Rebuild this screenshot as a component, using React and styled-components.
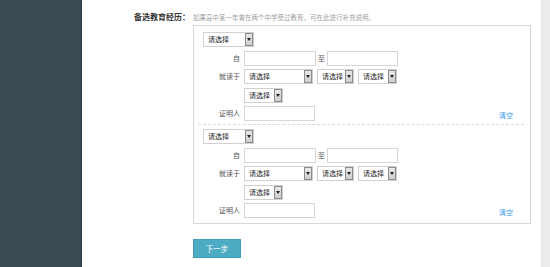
import styled, { createGlobalStyle } from 'styled-components';

const GlobalStyle = createGlobalStyle`
  html, body {
    margin: 0;
    padding: 0;
    background: #fff;
  }
  body {
    font-family: "Noto Sans CJK SC", "Liberation Sans", sans-serif;
    font-size: 7px;
    color: #333;
  }
`;

const groups = [0, 1];

const FakeSelect = ({ width, text = '请选择' }) => (
  <SelectBox $width={width}>
    <SelectText>{text}</SelectText>
    <SelectArrow>
      <svg width='4' height='3' viewBox='0 0 4 3'>
        <path d='M0 0 L4 0 L2 3 Z' fill='#222' />
      </svg>
    </SelectArrow>
  </SelectBox>
);

const EducationGroup = ({ last }) => (
  <Group $last={last}>
    <TypeRow>
      <FakeSelect width={51} />
    </TypeRow>
    <FieldRow>
      <FieldLabel>自</FieldLabel>
      <Controls $gap={2}>
        <TextInput $width={72} />
        <Between>至</Between>
        <TextInput $width={71} />
      </Controls>
    </FieldRow>
    <FieldRow>
      <FieldLabel>就读于</FieldLabel>
      <Controls $gap={4}>
        <FakeSelect width={69} />
        <FakeSelect width={37} />
        <FakeSelect width={39} />
      </Controls>
    </FieldRow>
    <FieldRow>
      <FieldLabel />
      <Controls>
        <FakeSelect width={39} />
      </Controls>
    </FieldRow>
    <FieldRow>
      <FieldLabel>证明人</FieldLabel>
      <Controls>
        <TextInput $width={71} />
        <ClearLink href='#'>清空</ClearLink>
      </Controls>
    </FieldRow>
  </Group>
);

const App = () => {
  return (
    <>
      <GlobalStyle />
      <Page>
        <Sidebar />
        <Main>
          <FormRow>
            <RowLabel>备选教育经历：</RowLabel>
            <RowBody>
              <Hint>如果高中某一年曾在两个中学受过教育，可在此进行补充说明。</Hint>
              <EducationBox>
                {groups.map(i => (
                  <EducationGroup key={i} last={i === groups.length - 1} />
                ))}
              </EducationBox>
            </RowBody>
          </FormRow>
          <FormRow>
            <RowLabel />
            <RowBody>
              <NextButton>下一步</NextButton>
            </RowBody>
          </FormRow>
        </Main>
        <RightStrip />
      </Page>
    </>
  );
};

const Page = styled.div`
  display: flex;
  height: 267px;
  overflow: hidden;
`;

const Sidebar = styled.div`
  width: 81px;
  background: #3a4952;
  border-right: 1px solid #2f3d45;
`;

const Main = styled.div`
  flex: 1;
  padding-top: 12px;
  background: #fff;
`;

const RightStrip = styled.div`
  width: 8px;
  background: #ececec;
  border-left: 1px solid #e2e2e2;
`;

const FormRow = styled.div`
  display: grid;
  grid-template-columns: 108px 1fr;
  column-gap: 3px;
  padding-right: 10px;
`;

const RowLabel = styled.div`
  text-align: right;
  font-weight: bold;
  font-size: 8px;
  line-height: 10px;
  color: #333;
`;

const RowBody = styled.div`
  display: flex;
  flex-direction: column;
  align-items: flex-start;
`;

const Hint = styled.div`
  font-size: 6.5px;
  line-height: 10px;
  color: #a0a0a0;
  margin-bottom: 3px;
`;

const EducationBox = styled.div`
  align-self: stretch;
  border: 1px solid #d8d8d8;
  margin-bottom: 15px;
`;

const Group = styled.div`
  display: flex;
  flex-direction: column;
  gap: 3.5px;
  padding: ${props => (props.$last ? '4px 0 5px' : '6px 0 3px')};
  margin: 0 6px 0 4px;
  border-bottom: ${props => (props.$last ? 'none' : '1px dashed #dcdcdc')};
`;

const TypeRow = styled.div`
  display: flex;
  padding-left: 5px;
`;

const FieldRow = styled.div`
  display: grid;
  grid-template-columns: 42px 1fr;
  column-gap: 4px;
  align-items: center;
`;

const FieldLabel = styled.div`
  text-align: right;
  color: #555;
  font-size: 7px;
  line-height: 15px;
`;

const Controls = styled.div`
  display: flex;
  align-items: center;
  gap: ${props => props.$gap || 0}px;
`;

const TextInput = styled.div`
  box-sizing: border-box;
  width: ${props => props.$width}px;
  height: 15px;
  border: 1px solid #d6d6d6;
  background: #fff;
`;

const Between = styled.span`
  color: #555;
  font-size: 7px;
`;

const SelectBox = styled.div`
  box-sizing: border-box;
  width: ${props => props.$width}px;
  height: 15px;
  display: flex;
  align-items: stretch;
  border: 1px solid #d0d0d0;
  background: #fff;
`;

const SelectText = styled.span`
  flex: 1;
  padding-left: 4px;
  font-size: 7px;
  line-height: 13px;
  color: #222;
  white-space: nowrap;
  overflow: hidden;
`;

const SelectArrow = styled.span`
  box-sizing: border-box;
  width: 8px;
  display: flex;
  align-items: center;
  justify-content: center;
  background: linear-gradient(#e8e8e8, #cfcfcf);
  border: 1px solid #8c8c8c;
`;

const ClearLink = styled.a`
  margin-left: auto;
  margin-right: 11px;
  margin-top: 2px;
  font-size: 7px;
  color: #3b9ee8;
  text-decoration: none;
`;

const NextButton = styled.button`
  box-sizing: border-box;
  width: 48px;
  height: 19px;
  padding: 0;
  border: 1px solid #3f9db5;
  background: #4cacc4;
  color: #fff;
  font-family: "Noto Sans CJK SC", "Liberation Sans", sans-serif;
  font-size: 7.5px;
  cursor: pointer;
`;

export default App;
